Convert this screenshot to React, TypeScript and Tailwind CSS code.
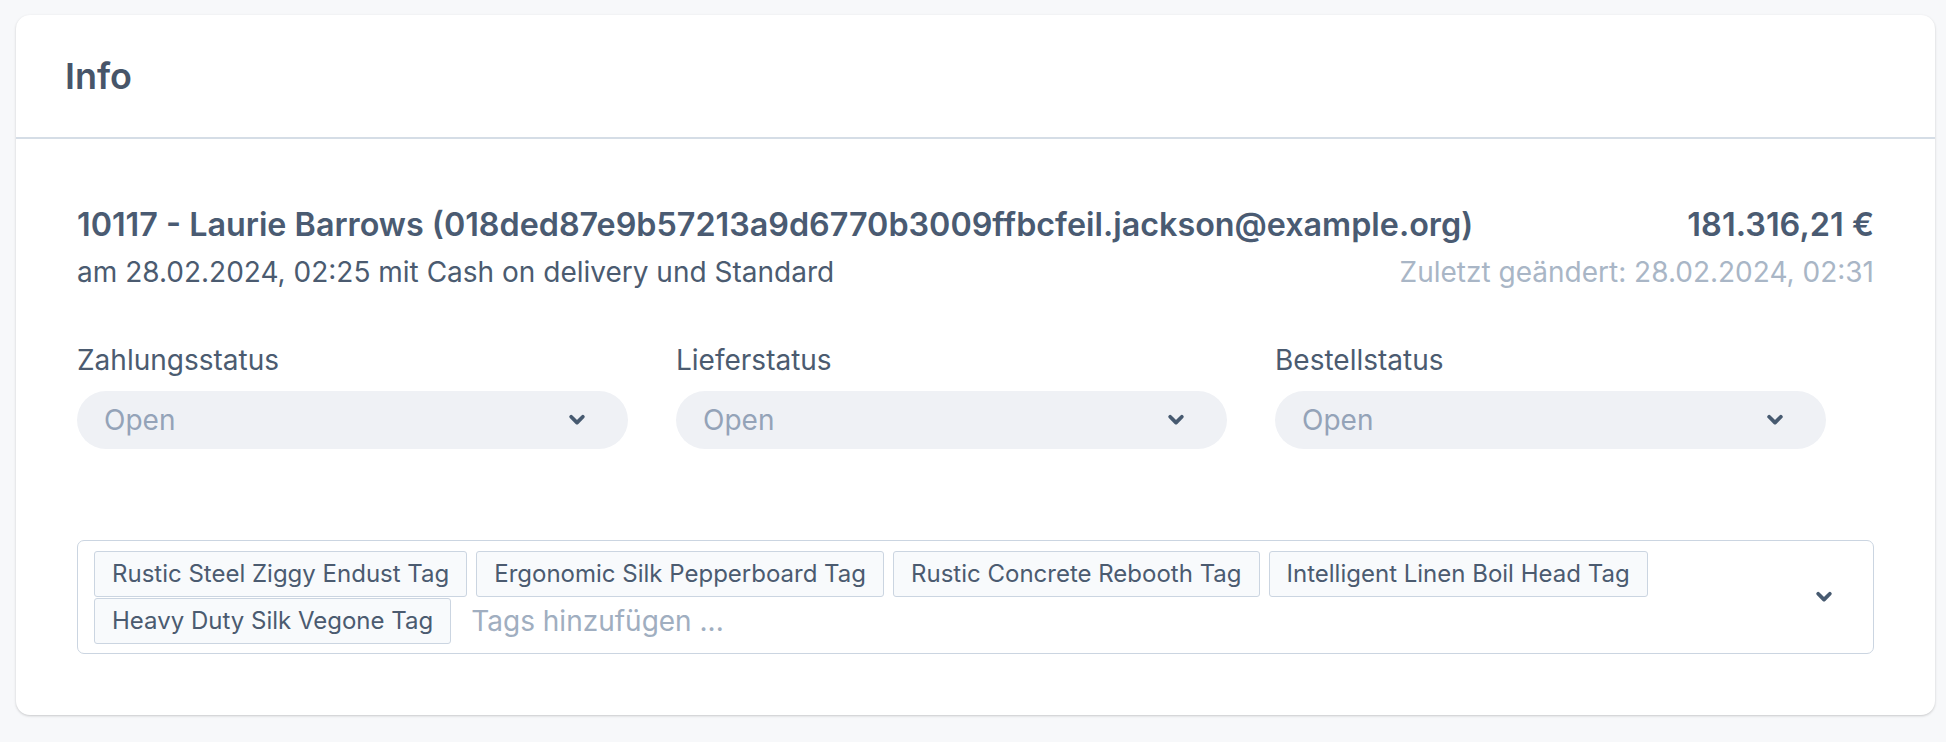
import React from "react";

const Chevron = ({ className = "" }: { className?: string }) => (
  <svg viewBox="0 0 20 20" className={className} fill="none" stroke="currentColor" strokeWidth={2.9} strokeLinecap="round" strokeLinejoin="round">
    <path d="M5.5 7.5l4.5 4.5 4.5-4.5" />
  </svg>
);

const tags = [
  "Rustic Steel Ziggy Endust Tag",
  "Ergonomic Silk Pepperboard Tag",
  "Rustic Concrete Rebooth Tag",
  "Intelligent Linen Boil Head Tag",
  "Heavy Duty Silk Vegone Tag",
];

function Select({ label }: { label: string }) {
  return (
    <div className="pr-[48px]">
      <div className="text-[28px] leading-[40px] text-[#4b5b70]">{label}</div>
      <div className="mt-[11px] h-[58px] rounded-full bg-[#eff1f5] flex items-center justify-between pl-[27px] pr-[38px]">
        <span className="text-[28px] text-[#94a3b8]">Open</span>
        <Chevron className="w-[26px] h-[26px] text-[#475a70]" />
      </div>
    </div>
  );
}

export default function App() {
  return (
    <div className="w-[1946px] h-[742px] bg-[#f7f8fa] pt-[15px] px-[16px] font-['Inter',sans-serif]">
      <div className="w-[1919px] bg-white rounded-[14px] shadow-[0_1px_3px_rgba(0,0,0,0.14),0_1px_2px_rgba(0,0,0,0.06)]">
        <div className="h-[124px] border-b-[2px] border-[#d5dde6] flex items-center pl-[49px]">
          <h2 className="text-[36px] font-semibold text-[#475569] leading-none">Info</h2>
        </div>
        <div className="px-[61px] pt-[64px] pb-[61px]">
          <div className="flex justify-between items-center whitespace-nowrap">
            <div className="text-[32.3px] leading-[44px] font-semibold text-[#4a5b72]">
              10117 - Laurie Barrows (018ded87e9b57213a9d6770b3009ffbcfeil.jackson@example.org)
            </div>
            <div className="text-[32.5px] leading-[44px] font-semibold text-[#4a5b72]">181.316,21 €</div>
          </div>
          <div className="mt-[5px] flex justify-between items-center whitespace-nowrap">
            <div className="text-[28px] leading-[40px] text-[#4b5b70]">
              am 28.02.2024, 02:25 mit Cash on delivery und Standard
            </div>
            <div className="text-[28px] leading-[40px] text-[#a9b6c6]">Zuletzt geändert: 28.02.2024, 02:31</div>
          </div>

          <div className="mt-[48px] grid grid-cols-3">
            <Select label="Zahlungsstatus" />
            <Select label="Lieferstatus" />
            <Select label="Bestellstatus" />
          </div>

          <div className="mt-[91px] border-[1.5px] border-[#cbd5e1] rounded-[7px] flex items-center pl-[16px] pr-[36px] py-[9.5px]">
            <div className="flex-1 flex flex-wrap items-center gap-x-[9px] gap-y-[1px]">
              {tags.map((t) => (
                <span
                  key={t}
                  className="h-[46px] px-[17px] flex items-center bg-[#f8fafc] border-[1.5px] border-[#cbd5e1] rounded-[3px] text-[24px] text-[#4b5b70] whitespace-nowrap"
                >
                  {t}
                </span>
              ))}
              <span className="ml-[11px] text-[28px] text-[#a0aec0] whitespace-nowrap">Tags hinzufügen ...</span>
            </div>
            <Chevron className="w-[26px] h-[26px] text-[#475a70]" />
          </div>
        </div>
      </div>
    </div>
  );
}
